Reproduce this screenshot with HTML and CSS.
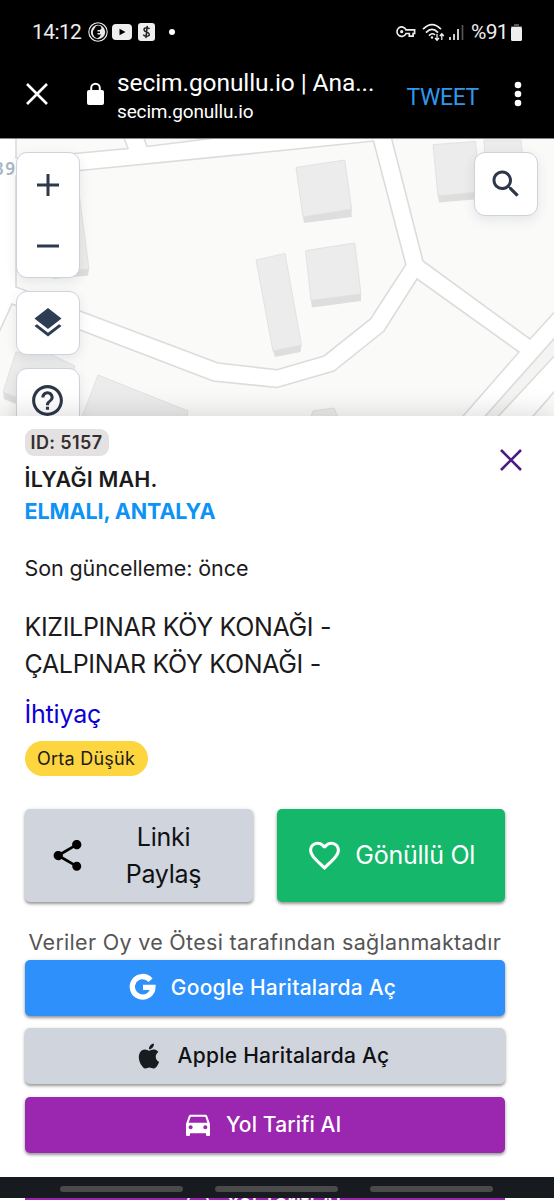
FILE: index.html
```html
<!DOCTYPE html>
<html lang="tr">
<head>
<meta charset="utf-8">
<title>secim.gonullu.io</title>
<link rel="stylesheet" href="styles.css">
</head>
<body>
<div class="phone">
  <header class="top">
    <div class="status">
      <span class="clock">14:12</span>
      <svg class="s-face" width="20" height="20" viewBox="0 0 20 20"><circle cx="10" cy="10" r="9.2" fill="none" stroke="#eee" stroke-width="1.1"/><circle cx="10" cy="10" r="7.2" fill="#e8e8e8"/><path d="M8 4c3-1.500 5.500 0 5.500 2.500L12 8H9.500v1.500H12V11H9.500v1.500H13l-1.500 2.500L9 16.500C5.500 15 4.500 12 5 9z" fill="#050505"/></svg>
      <svg class="s-tube" width="20" height="16" viewBox="0 0 20 16"><rect width="20" height="16" rx="4" fill="#eee"/><path d="M7.500 4.700v6.600l6-3.300z" fill="#000"/></svg>
      <svg class="s-cash" width="17" height="18" viewBox="0 0 17 18"><rect width="17" height="18" rx="3" fill="#eee"/><path d="M11.500 6C11 4.500 6 4 6 6.700 6 9.500 11.300 8.500 11.300 11.500 11.300 14.300 5.800 13.500 5.500 11.500M9.300 2.800L7.900 15.200" fill="none" stroke="#222" stroke-width="1.500"/></svg>
      <span class="dot"></span>
      <span class="grow"></span>
      <svg class="s-key" width="20" height="14" viewBox="0 0 20 14"><path d="M10 4.800h8.600v3.700h-1.500v2.700h-3.800V8.500H10A4.700 4.700 0 1 1 10 4.800z" fill="none" stroke="#eee" stroke-width="1.700"/><circle cx="5.700" cy="6.700" r="1.600" fill="#eee"/></svg>
      <svg class="s-wifi" width="23" height="19" viewBox="0 0 23 19"><g fill="none" stroke="#eee" stroke-width="1.700"><path d="M1 6.200Q10 -2.800 19 6.200M4 9.600Q10 3.200 16 9.600M7 12.600Q10 9.200 13 12"/><path d="M15 11v6M13 15l2 2.300 2-2.300M19.800 17v-6M17.800 13l2-2.300 2 2.300" stroke-width="1.300"/></g><circle cx="10" cy="14.500" r="1.200" fill="#eee"/></svg>
      <svg class="s-cell" width="15" height="15" viewBox="0 0 15 15"><path d="M1 12v3M5 9v6M9 4v11" stroke="#eee" stroke-width="1.700"/><path d="M13.500 0v15" stroke="#555" stroke-width="1.700"/></svg>
      <span class="pct">%91</span>
      <svg class="s-bat" width="11" height="17" viewBox="0 0 11 17"><path d="M3 0h5v2h3v3H0V2h3z" fill="#555"/><rect y="3" width="11" height="14" rx="1.500" fill="#eee"/></svg>
    </div>
    <div class="bar">
      <svg class="b-close" width="22" height="22" viewBox="0 0 22 22"><path d="M1 1l20 20M21 1L1 21" stroke="#fff" stroke-width="2.600"/></svg>
      <svg class="b-lock" width="17" height="22" viewBox="0 0 17 22"><rect y="7" width="17" height="15" rx="2" fill="#fff"/><path d="M4.200 8V5a4.300 4.300 0 0 1 8.600 0v3" fill="none" stroke="#fff" stroke-width="2"/></svg>
      <div class="urls"><div class="title">secim.gonullu.io | Ana...</div><div class="host">secim.gonullu.io</div></div>
      <span class="tweet">TWEET</span>
      <svg class="b-more" width="8" height="26" viewBox="0 0 8 26"><g fill="#fff"><circle cx="4" cy="4" r="3.300"/><circle cx="4" cy="13" r="3.300"/><circle cx="4" cy="22" r="3.300"/></g></svg>
    </div>
  </header>

  <section class="map">
    <svg class="tiles" width="554" height="278" viewBox="0 0 554 278">
      <rect width="554" height="278" fill="#fff"/>
      <g fill="#fafaf9" stroke="#dcdcdc" stroke-width="1.600">
        <path d="M16-5V20L80 15 128 10.500 122-5zM142-5l5 13.500L215 0 240-3z"/>
        <path d="M16 38L80 32.500 277 13 373.500 3 405.800 126.700 370.500 181 324 218 277 231.700 218 225 80 173 16 149z"/>
        <path d="M391-2L423 123 530 201 560 168V-5z"/>
        <path d="M12 166L80 192 213 243 277 249.500 334 233 384 193 417 141 519 214 457 285H-5V203z"/>
        <path d="M560 194L480 284H493L560 212z" fill="#f4f4f3"/>
        <path d="M560 247L528 284H560z" />
      </g>
      <g fill="#ececec" stroke="#e2e2e2" stroke-width="1">
        <path d="M296 29.500L344.700 22 351.700 71 303 79zM305.500 112.700L354.700 105 361 156 311 162.500zM256 122L285 115.500 301.500 207 273 213zM433 6.700L475.500 3.500 480 54 438 58zM484 2L521 2 523 20 485 20zM50 20L79 55 89 131 50 135zM16 214L50 216 75 228 60 278 3 254zM98 237L188 273 187 279H82zM313 273L334 270 338 279H311z"/>
      </g>
      <g fill="#dedede">
        <path d="M303 79L351.700 71V79L304 85zM311 162.500L361 156V163L312 169.500zM273 213L301.500 207 300.500 214 275 219zM438 58L480 54V61L439 64.500zM50 134L89 131 88 137.500 53 141zM3 254L16 259V266L4 261z"/>
      </g>
      <rect width="554" height="1" fill="#858585"/>
    </svg>
    <span class="house-no">39</span>
    <div class="controls">
      <div class="ctl zoom">
        <svg width="22" height="22" viewBox="0 0 22 22"><path d="M0 11h22M11 0v22" stroke="#2d3a4e" stroke-width="3"/></svg>
        <svg width="22" height="22" viewBox="0 0 22 22"><path d="M0 11h22" stroke="#2d3a4e" stroke-width="3"/></svg>
      </div>
      <div class="ctl"><svg width="36" height="36" viewBox="0 0 24 24"><path fill="#2d3e54" d="M11.990 18.540l-7.370-5.730L3 14.070l9 7 9-7-1.630-1.270-7.380 5.740zM12 16l7.360-5.730L21 9l-9-7-9 7 1.630 1.270L12 16z"/></svg></div>
      <div class="ctl"><svg width="37" height="37" viewBox="0 0 24 24"><path fill="#2d3748" d="M11 18h2v-2h-2v2zm1-16C6.480 2 2 6.480 2 12s4.480 10 10 10 10-4.480 10-10S17.520 2 12 2zm0 18c-4.410 0-8-3.590-8-8s3.590-8 8-8 8 3.590 8 8-3.590 8-8 8zm0-14c-2.210 0-4 1.790-4 4h2c0-1.100.9-2 2-2s2 .9 2 2c0 2-3 1.750-3 5h2c0-2.250 3-2.500 3-5 0-2.210-1.790-4-4-4z"/></svg></div>
    </div>
    <div class="ctl search"><svg width="36" height="36" viewBox="0 0 24 24"><path fill="#2d3748" d="M15.500 14h-.79l-.28-.27C15.410 12.590 16 11.110 16 9.500 16 5.910 13.090 3 9.500 3S3 5.910 3 9.500 5.910 16 9.500 16c1.610 0 3.090-.59 4.230-1.570l.27.28v.79l5 4.990L20.490 19l-4.990-5zm-6 0C7.010 14 5 11.990 5 9.500S7.010 5 9.500 5 14 7.010 14 9.500 11.990 14 9.500 14z"/></svg></div>
  </section>

  <main class="sheet">
    <div class="head">
      <div>
        <span class="id">ID: 5157</span>
        <div class="name">İLYAĞI MAH.</div>
        <div class="city">ELMALI, ANTALYA</div>
      </div>
      <svg class="x" width="22" height="22" viewBox="0 0 22 22"><path d="M1 1l20 20M21 1L1 21" stroke="#4b1a85" stroke-width="2.600"/></svg>
    </div>
    <div class="updated">Son güncelleme: önce</div>
    <div class="place"><div class="p1">KIZILPINAR KÖY KONAĞI -</div><div class="p2">ÇALPINAR KÖY KONAĞI -</div></div>
    <div class="need">İhtiyaç</div>
    <span class="chip">Orta Düşük</span>
    <div class="pair">
      <div class="btn big grey"><svg width="37" height="37" viewBox="0 0 24 24"><path d="M18 16.080c-.76 0-1.440.3-1.960.77L8.910 12.700c.05-.23.09-.46.09-.7s-.04-.47-.09-.7l7.050-4.110c.54.5 1.250.81 2.040.81 1.660 0 3-1.340 3-3s-1.340-3-3-3-3 1.340-3 3c0 .24.04.47.09.7L8.040 9.810C7.500 9.310 6.790 9 6 9c-1.660 0-3 1.340-3 3s1.340 3 3 3c.79 0 1.500-.31 2.040-.81l7.120 4.160c-.05.21-.08.43-.08.65 0 1.610 1.310 2.920 2.920 2.920s2.920-1.310 2.920-2.920-1.310-2.920-2.920-2.920z"/></svg><span class="share">Linki<br>Paylaş</span></div>
      <div class="btn big green"><svg width="37" height="37" viewBox="0 0 24 24"><path fill="#fff" d="M16.500 3c-1.740 0-3.410.81-4.500 2.090C10.910 3.810 9.240 3 7.500 3 4.420 3 2 5.420 2 8.500c0 3.780 3.400 6.860 8.550 11.540L12 21.350l1.450-1.320C18.600 15.360 22 12.280 22 8.500 22 5.420 19.580 3 16.500 3zm-4.400 15.550l-.1.100-.1-.1C7.140 14.240 4 11.390 4 8.500 4 6.500 5.500 5 7.500 5c1.540 0 3.040.99 3.570 2.360h1.870C13.460 5.990 14.960 5 16.500 5c2 0 3.500 1.500 3.500 3.500 0 2.890-3.140 5.740-7.900 10.050z"/></svg><span class="vol">Gönüllü Ol</span></div>
    </div>
    <div class="source">Veriler Oy ve Ötesi tarafından sağlanmaktadır</div>
    <div class="stack">
      <div class="btn blue"><svg width="28" height="28" viewBox="0 0 28 28"><path d="M21.500 7.200A10.300 10.300 0 1 0 23.900 14.300H14" fill="none" stroke="#fff" stroke-width="5.300"/></svg><span class="g">Google Haritalarda Aç</span></div>
      <div class="btn grey"><svg width="30" height="30" viewBox="0 0 24 24"><path fill="#181b1f" d="M18.710 19.500c-.83 1.240-1.710 2.450-3.050 2.470-1.340.03-1.770-.79-3.290-.79-1.530 0-2 .77-3.270.82-1.310.05-2.300-1.320-3.140-2.530C4.250 17 2.940 12.450 4.700 9.390c.87-1.520 2.430-2.480 4.120-2.510 1.280-.02 2.500.87 3.290.87.78 0 2.260-1.070 3.810-.91.65.03 2.470.26 3.640 1.980-.09.06-2.170 1.280-2.150 3.810.03 3.020 2.650 4.030 2.680 4.040-.03.070-.42 1.440-1.380 2.830M13 3.500c.73-.83 1.940-1.460 2.940-1.500.13 1.170-.34 2.350-1.040 3.190-.69.85-1.830 1.510-2.950 1.420-.15-1.150.41-2.350 1.050-3.110z"/></svg><span class="a">Apple Haritalarda Aç</span></div>
      <div class="btn purple"><svg width="32" height="32" viewBox="0 0 24 24"><path fill="#fff" d="M18.920 6.010C18.720 5.420 18.160 5 17.500 5h-11c-.66 0-1.210.42-1.420 1.010L3 12v8c0 .55.45 1 1 1h1c.55 0 1-.45 1-1v-1h12v1c0 .55.45 1 1 1h1c.55 0 1-.45 1-1v-8l-2.080-5.990zM6.500 16c-.83 0-1.500-.67-1.500-1.500S5.670 13 6.500 13s1.500.67 1.500 1.500S7.330 16 6.500 16zm11 0c-.83 0-1.500-.67-1.500-1.500s.67-1.500 1.500-1.500 1.500.67 1.500 1.500-.67 1.500-1.500 1.500zM5 11l1.500-4.500h11L19 11H5z"/></svg><span class="y">Yol Tarifi Al</span></div>
      <div class="btn purple next"><svg width="32" height="32" viewBox="0 0 24 24"><path fill="#fff" d="M18.920 6.010C18.720 5.420 18.160 5 17.500 5h-11c-.66 0-1.210.42-1.420 1.010L3 12v8h18v-8zM5 11l1.500-4.500h11L19 11H5z"/></svg><span class="y">Yol Tarifi Al</span></div>
    </div>
  </main>
  <nav class="gestures"><i></i><i></i><i></i></nav>
</div>
</body>
</html>
```
FILE: styles.css
```css
* { box-sizing: border-box; }
body { margin: 0; background: #fff; }
svg { display: block; flex: none; overflow: visible; }
.phone { position: relative; width: 554px; height: 1200px; overflow: hidden; font-family: Inter, "Liberation Sans", sans-serif; color: #1b1b1d; }
.top { height: 138px; background: #000; color: #eee; font-family: Roboto, sans-serif; }
.status { display: flex; align-items: center; height: 64px; padding: 0 32px; font-size: 21px; white-space: nowrap; }
.clock { width: 56px; letter-spacing: -.6px; }
.s-tube { margin-left: 4px; }
.s-cash { margin-left: 6px; }
.dot { width: 6px; height: 6px; margin-left: 14px; border-radius: 50%; background: #fff; }
.grow { flex: 1; }
.s-wifi { margin-left: 6px; margin-top: 1px; }
.s-cell { margin-left: 4px; margin-top: 1px; }
.pct { margin-left: 7px; width: 37px; letter-spacing: -.7px; }
.s-bat { margin-left: 3px; }
.bar { display: flex; height: 60px; padding: 0 31px 0 26px; align-items: center; color: #fff; white-space: nowrap; }
.b-lock { margin-left: 39px; }
.urls { width: 276px; margin-left: 13px; margin-top: 4px; }
.title { font-size: 24.500px; line-height: 30px; letter-spacing: -.08px; }
.host { font-size: 19px; line-height: 27px; letter-spacing: -.15px; }
.tweet { width: 88px; margin-left: 13.500px; margin-top: 6px; color: #2f98ea; font-size: 23px; letter-spacing: -.4px; }
.b-more { margin-left: 19.500px; }
.b-more, .tweet { flex: none; }

.map { position: relative; height: 278px; overflow: hidden; }
.house-no { position: absolute; left: -6px; top: 21px; color: #a9b7c4; font: 600 17px/20px "Noto Sans", sans-serif; letter-spacing: 1.500px; }
.controls { position: absolute; left: 15.500px; top: 14px; display: flex; flex-direction: column; gap: 13px; }
.ctl { display: flex; align-items: center; justify-content: center; width: 64px; height: 64px; border: 1px solid #cdd2dc; border-radius: 11px; background: #fff; box-shadow: 0 4px 12px rgba(40,50,70,.1); }
.zoom { flex-direction: column; height: 126px; gap: 39px; }
.search { position: absolute; left: 474px; top: 14px; }
.tiles { width: 554px; }

.sheet { position: relative; height: 784px; padding: 13px 49.500px 0 24.500px; background: #fff; box-shadow: 0 -4px 24px rgba(0,0,0,.13); white-space: nowrap; }
.head { display: flex; justify-content: space-between; }
.x { margin: 20px -17px 0 0; }
.id { display: block; width: 84px; height: 27px; padding-left: 6px; border-radius: 9px; background: #e3e1e1; color: #352d30; font-size: 18px; font-weight: 600; line-height: 27px; letter-spacing: .4px; }
.name { margin-top: 7px; font-size: 21.500px; line-height: 32px; font-weight: 600; letter-spacing: .2px; }
.city { font-size: 21.500px; line-height: 32px; font-weight: 700; color: #0c93f5; letter-spacing: -.1px; }
.updated { margin-top: 25px; font-size: 21.500px; line-height: 32px; letter-spacing: -.1px; }
.place { margin-top: 25px; font-size: 25px; line-height: 37px; letter-spacing: -.34px; }
.need { margin-top: 13px; font-size: 25px; line-height: 37px; color: #0b00d8; letter-spacing: -.2px; }
.chip { display: block; width: 123px; height: 35px; margin-top: 8px; padding-left: 12.500px; border-radius: 18px; background: #fcd53f; font-size: 18px; line-height: 35px; letter-spacing: .25px; }
.pair { display: flex; gap: 24px; margin-top: 33px; }
.btn { display: flex; align-items: center; justify-content: center; gap: 14px; height: 56px; border-radius: 5px; box-shadow: 0 2px 3px rgba(0,0,0,.35), 0 1px 5px rgba(0,0,0,.12); font-size: 21px; font-weight: 500; color: #fff; letter-spacing: .26px; }
.big { width: 228px; height: 93px; font-size: 25px; line-height: 37px; font-weight: 400; letter-spacing: -.25px; }
.green { gap: 12.500px; }
.grey { background: #d0d4dd; color: #101114; }
.green { background: #15b76a; }
.blue { background: #2e90fa; }
.purple { background: #9b26b0; }
.share { width: 120px; text-align: center; margin-left: 4px; }
.big.grey { padding-right: 5px; }
.source { margin-top: 24px; padding-left: 4px; color: #555; font-size: 21.500px; line-height: 32px; letter-spacing: .3px; }
.stack { display: flex; flex-direction: column; gap: 12.500px; margin-top: 1.500px; }
.stack .btn { padding-bottom: 1px; }
.stack .blue { padding-right: 4px; }
.stack .purple { padding-right: 6px; gap: 12px; letter-spacing: .15px; }
.stack .grey { padding-right: 6px; }
.stack .next { margin-top: 13px; padding-bottom: 7px; box-shadow: none; }
.gestures { position: absolute; left: 0; top: 1177px; width: 554px; height: 21px; display: flex; gap: 32px; padding: 9px 0 0 60.400px; background: #171b1f; }
.gestures i { width: 123px; height: 6px; border-radius: 3px; background: #4a4a4b; }
```
